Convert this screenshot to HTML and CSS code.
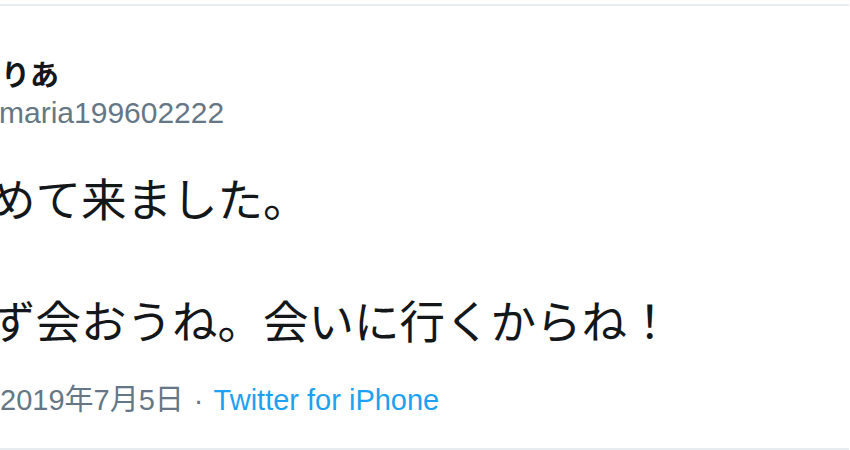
FILE: index.html
```html
<!DOCTYPE html>
<html lang="ja">
<head>
    <meta charset="UTF-8">
    <meta name="viewport" content="width=device-width, initial-scale=1.0">
    <title>Tweet</title>
    <link rel="stylesheet" href="styles.css">
</head>
<body>
    <div class="tweet">
        <div class="tweet-header">
            <div class="user-name">りあ</div>
            <div class="user-handle">maria199602222</div>
        </div>

        <p class="tweet-text">めて来ました。<br><br>ず会おうね。会いに行くからね！</p>

        <div class="tweet-meta">
            <span class="tweet-date">2019年7月5日</span>
            <span class="sep">·</span>
            <a class="tweet-source" href="#">Twitter for iPhone</a>
        </div>
    </div>
</body>
</html>
```

FILE: styles.css
```css
body {
    margin: 0;
    background: #fff;
    font-family: "Liberation Sans", "Noto Sans CJK JP", sans-serif;
    color: #14171a;
}
.tweet {
    box-sizing: border-box;
    width: 849px;
    height: 446px;
    margin-top: 4px;
    padding-top: 53px;
    border-top: 2px solid #e6ecf0;
    border-bottom: 2px solid #e6ecf0;
    overflow: hidden;
    white-space: nowrap;
}
.tweet-header {
    display: flex;
    flex-direction: column;
    gap: 3px;
}
.user-name {
    font-size: 29px;
    line-height: 34px;
    font-weight: bold;
    margin-left: 1px;
}
.user-handle {
    font-size: 30px;
    line-height: 34px;
    color: #657786;
    margin-left: -1px;
}
.tweet-text {
    margin: 41px 0 0 -10px;
    font-size: 45.5px;
    line-height: 61px;
}
.tweet-meta {
    margin-top: 29px;
    font-size: 29px;
    line-height: 34px;
    color: #657786;
}
.sep {
    margin: 0 2px;
}
.tweet-source {
    color: #1da1f2;
    text-decoration: none;
}
```
